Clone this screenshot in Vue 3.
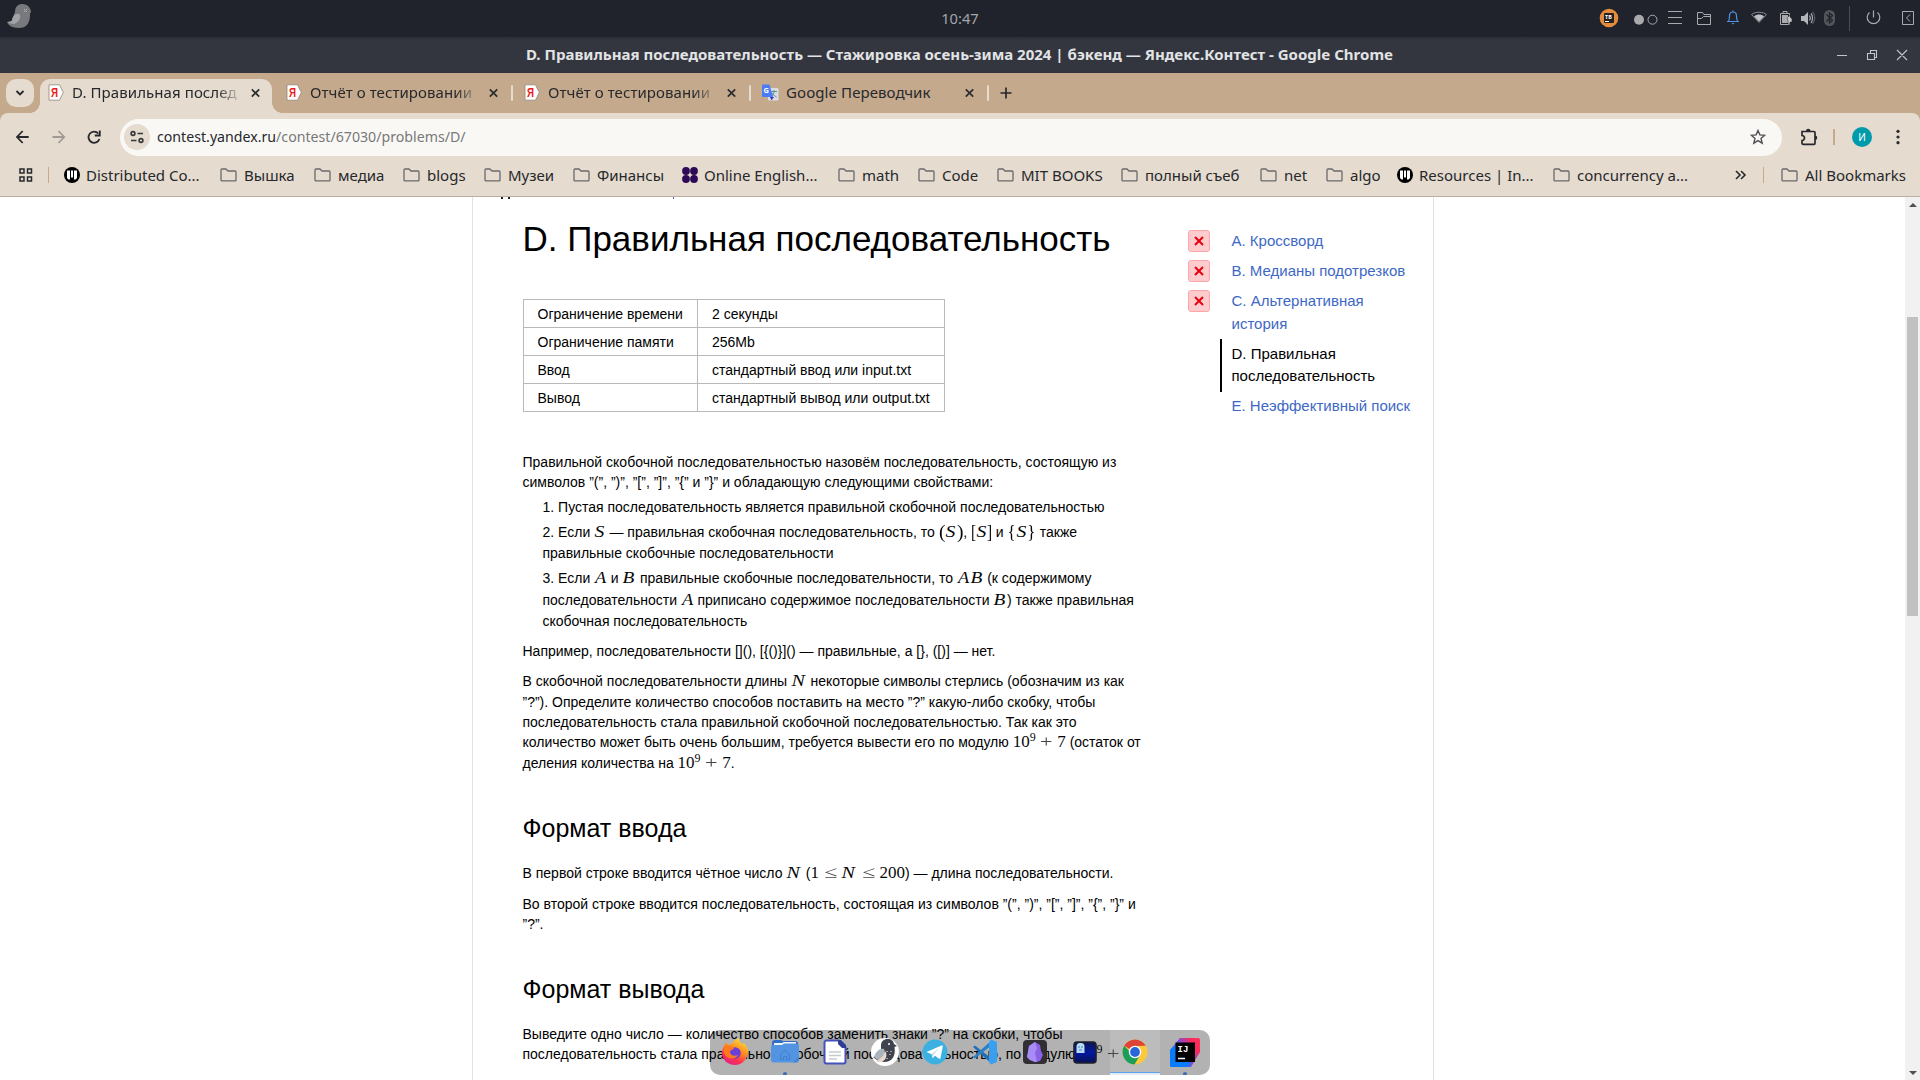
<script setup>
const tabs = [
  { title: 'D. Правильная послед', icon: 'ya', active: true },
  { title: 'Отчёт о тестировании', icon: 'ya' },
  { title: 'Отчёт о тестировании', icon: 'ya' },
  { title: 'Google Переводчик', icon: 'gt', short: true },
]
const bookmarks = [
  { t: 'Distributed Co...', i: 'pillars', w: 156 },
  { t: 'Вышка', i: 'folder', w: 94 },
  { t: 'медиа', i: 'folder', w: 89 },
  { t: 'blogs', i: 'folder', w: 81 },
  { t: 'Музеи', i: 'folder', w: 89 },
  { t: 'Финансы', i: 'folder', w: 109 },
  { t: 'Online English...', i: 'clover', w: 156 },
  { t: 'math', i: 'folder', w: 80 },
  { t: 'Code', i: 'folder', w: 79 },
  { t: 'MIT BOOKS', i: 'folder', w: 124 },
  { t: 'полный съеб', i: 'folder', w: 139 },
  { t: 'net', i: 'folder', w: 66 },
  { t: 'algo', i: 'folder', w: 71 },
  { t: 'Resources | In...', i: 'pillars', w: 156 },
  { t: 'concurrency a...', i: 'folder', w: 160 },
]
const limits = [
  ['Ограничение времени', '2 секунды'],
  ['Ограничение памяти', '256Mb'],
  ['Ввод', 'стандартный ввод или input.txt'],
  ['Вывод', 'стандартный вывод или output.txt'],
]
const problems = [
  { lines: ['A. Кроссворд'], failed: true },
  { lines: ['B. Медианы подотрезков'], failed: true },
  { lines: ['C. Альтернативная', 'история'], failed: true },
  { lines: ['D. Правильная', 'последовательность'], current: true },
  { lines: ['E. Неэффективный поиск'] },
]
</script>

<template>
  <div class="screen">
    <header class="panel">
      <svg class="bird" width="24" height="26" viewBox="0 0 24 26">
        <path d="M8 8C8 3 11 0 15 0c5 0 8 3 8.500 6l1 2-1.500 1c.5 9-3 15-11 15C5 24 1 21 0 18c2 1 4 0 5-2z" fill="#77797d" />
        <path d="M5 17c0-4 3-8 7-7 3 2 0 9-5 10-3 0-5-1-7-2z" fill="#a2a3a6" />
        <path d="m17 5 3 3m0-3-3 3" stroke="#a8a9ab" stroke-width="1" />
      </svg>
      <span class="clock">10:47</span>
      <div class="tray">
        <svg width="30" height="37" viewBox="0 0 30 37"><circle cx="13" cy="18" r="9.300" fill="#e48b3d" /><rect x="8" y="13" width="10" height="10" rx="1" fill="#25201f" /><text x="9" y="18.800" font-size="5.500" font-weight="700" fill="#fff" font-family="Noto Sans">TB</text><path d="M9 21.500h4" stroke="#fff" /></svg>
        <svg width="38" height="37" viewBox="0 0 38 37"><circle cx="13" cy="19.700" r="5" fill="#a8aaae" /><circle cx="26.500" cy="19.700" r="4.500" fill="none" stroke="#a8aaae" /></svg>
        <svg width="26" height="37" viewBox="0 0 26 37"><path d="M4 11.500h14M4 17.500h14M4 23.500h14" stroke="#a8aaae" /></svg>
        <svg width="30" height="37" viewBox="0 0 30 37"><path d="M7.500 24.500v-12h5l1.500 2h6.500v10zM7.500 18.500h4l2-2h7M20.500 14.500v10" fill="none" stroke="#a8aaae" /></svg>
        <svg width="30" height="37" viewBox="0 0 30 37"><path d="M7 21.500h12M8.500 21c1-1 1-3 1-5 0-3 1.500-4 3.500-4s3.500 1 3.500 4c0 2 0 4 1 5M13 10.500v2" fill="none" stroke="#4f94e6" stroke-width="1.200" /><path d="M11.500 23h3l-1.500 1.500z" fill="#4f94e6" /></svg>
        <svg width="28" height="37" viewBox="0 0 28 37"><path d="M1.500 14.500C5 11.500 13 11.500 16.500 14.500L9 22.500z" fill="none" stroke="#85878b" /><path d="M4 16.200c3-2.400 7-2.400 10 0l-5 5.500z" fill="#c0c1c4" /></svg>
        <svg width="20" height="37" viewBox="0 0 20 37"><path d="M2.500 13.500h9v11h-9zM5 13v-1.500h4V13" fill="none" stroke="#a8aaae" /><path d="M4 15h6v8H4z" fill="#a8aaae" /><path d="m9 18 3-3v2l2 2v3h-2v2h-2v-3z" fill="#c4c5c7" stroke="#20232b" stroke-width=".5" /></svg>
        <svg width="20" height="37" viewBox="0 0 20 37"><path d="M3 16h3l4-4v13l-4-4H3z" fill="#b4b6b9" /><path d="M11.500 15.500c1 1.500 1 3.500 0 5M13 13.500c2 2 2 7 0 9.500" fill="none" stroke="#a8aaae" stroke-width="1.200" /><path d="M14.500 11.800c3 3 3 9 0 12" fill="none" stroke="#5b5d63" stroke-width="1.200" /></svg>
        <svg width="30" height="37" viewBox="0 0 30 37"><rect x="6" y="10" width="11" height="16" rx="5.500" fill="#53555a" /><path d="m8.500 14.500 6 6-3 2.500V13l3 2.500-6 6" fill="none" stroke="#20232b" stroke-width="1.200" /></svg>
        <svg width="36" height="37" viewBox="0 0 36 37"><path d="M1.500 6v25" stroke="#4b4d53" /><path d="M21.500 13a6.300 6.300 0 1 0 8 0M25.500 11v7" fill="none" stroke="#a8aaae" stroke-width="1.200" transform="translate(0 -.5)" /></svg>
        <svg width="36" height="37" viewBox="0 0 36 37"><path d="M18.500 11.500h11v13h-11zM26 14.500l-3.500 3.500 3.500 3.500" fill="none" stroke="#a8aaae" /></svg>
      </div>
    </header>

    <div class="titlebar">
      <span>D. Правильная последовательность — Стажировка осень-зима 2024 | бэкенд — Яндекс.Контест - Google Chrome</span>
      <svg class="winbtns" width="90" height="36" viewBox="0 0 90 36"><path d="M7 18.500h10M37.500 16.500h7v6h-7zM40.500 16v-2.500h6v7h-2M67 13l10 10m0-10L67 23" fill="none" stroke="#c3c4c7" stroke-width="1.100" /></svg>
    </div>

    <div class="tabstrip">
      <button class="search"><svg width="10" height="8" viewBox="0 0 10 8"><path d="m1.500 2 3.500 3.500L8.500 2" fill="none" stroke="#26282c" stroke-width="1.800" /></svg></button>
      <div v-for="(t, i) in tabs" :key="i" class="tab" :class="{ active: t.active }">
        <svg v-if="t.icon === 'ya'" class="fav" width="17" height="17" viewBox="0 0 17 17"><path d="M1 .8h10.500L15.300 8.500 11.500 16.200H1z" fill="#fff" stroke="#8f877e" stroke-width=".8" stroke-linejoin="round" /><text x="3" y="13" font-size="12" font-weight="700" fill="#f01818" font-family="Liberation Sans" textLength="7" lengthAdjust="spacingAndGlyphs">Я</text></svg>
        <svg v-else class="fav" width="17" height="17" viewBox="0 0 17 17"><rect x="6" y="4" width="10.500" height="12.500" rx="1.200" fill="#dcdde0" /><path d="M9 7.500h6M12 6v1.500c0 3-2 4-3 4.500m1-3c1 2 3 3 4.500 4" stroke="#5d8ba0" fill="none" /><path d="m8 13 4 0-2.500 3.300z" fill="#3a2fc0" /><path d="M1.200.5h6.300L11 13H1.200A1 1 0 0 1 0 12V1.500a1 1 0 0 1 1.200-1z" fill="#4a7df5" /><text x="1.600" y="9" font-size="7.500" font-weight="700" fill="#fff" font-family="Noto Sans">G</text></svg>
        <span class="ttl" :class="{ fade: !t.short }">{{ t.title }}</span>
        <svg class="x" width="9" height="10" viewBox="0 0 9 10"><path d="m.8 1.300 7.400 7.400m0-7.400L.8 8.700" stroke="#2b2c2e" stroke-width="1.700" /></svg>
        <i v-if="i > 0" class="tsep"></i>
      </div>
      <svg class="plus" width="12" height="12" viewBox="0 0 12 12"><path d="M6 .5v11M.5 6h11" stroke="#26282c" stroke-width="1.700" /></svg>
    </div>

    <div class="toolbar">
      <div class="nav">
        <svg width="36" height="20" viewBox="0 0 36 20"><path d="M12.500 4 6.800 10l5.700 6M7 10h11.500" transform="translate(-.8 0)" fill="none" stroke="#26282c" stroke-width="1.800" /></svg>
        <svg width="36" height="20" viewBox="0 0 36 20"><path d="m12 4 5.700 6-5.700 6M17.500 10H6" transform="translate(-.5 0)" fill="none" stroke="#a19a92" stroke-width="1.800" /></svg>
        <svg width="36" height="20" viewBox="0 0 36 20"><path d="M16.500 6.500A5.600 5.600 0 1 0 17.600 12M18 3.500v5h-5" transform="translate(-1.200 0)" fill="none" stroke="#26282c" stroke-width="1.800" /></svg>
      </div>
      <div class="url">
        <span class="site"><svg width="14" height="14" viewBox="0 0 14 14"><path d="M7.500 3.500H13M1 10.500h5.500" stroke="#35373a" stroke-width="1.700" /><circle cx="3" cy="3.500" r="1.900" fill="none" stroke="#35373a" stroke-width="1.600" /><circle cx="11" cy="10.500" r="1.900" fill="none" stroke="#35373a" stroke-width="1.600" /></svg></span>
        <span class="addr"><b>contest.yandex.ru</b>/contest/67030/problems/D/</span>
        <svg class="star" width="16" height="16" viewBox="0 0 16 16"><path d="m8 1.500 1.900 4.400 4.800.4-3.700 3.100 1.200 4.800L8 11.600l-4.200 2.600L5 9.400 1.300 6.300l4.800-.4z" fill="none" stroke="#505255" stroke-width="1.400" /></svg>
      </div>
      <svg class="puz" width="18" height="18" viewBox="0 0 18 18"><path d="M2 3.500h12a1 1 0 0 1 1 1v10.800a1 1 0 0 1-1 1H3a1 1 0 0 1-1-1V12.500c3.300 0 3.300-5 0-5z" fill="none" stroke="#26282c" stroke-width="1.700" /><path d="M6 3a2.200 2.200 0 0 1 4.500 0zM15 7.500a2.200 2.200 0 0 1 0 4.500z" fill="#26282c" /></svg>
      <i class="vsep a"></i>
      <span class="ava">И</span>
      <svg class="dots" width="4" height="16" viewBox="0 0 4 16"><circle cx="2" cy="2.300" r="1.600" fill="#26282c" /><circle cx="2" cy="8" r="1.600" fill="#26282c" /><circle cx="2" cy="13.700" r="1.600" fill="#26282c" /></svg>
    </div>

    <div class="bookmarks">
      <svg class="apps" width="14" height="14" viewBox="0 0 14 14"><path d="M1 1h4v4H1zM8.500 1h4v4h-4zM1 9h4v4H1zM8.500 9h4v4h-4z" fill="none" stroke="#26282c" stroke-width="1.500" /></svg>
      <i class="vsep b"></i>
      <div v-for="b in bookmarks" :key="b.t" class="bm" :style="{ width: b.w + 'px' }">
        <svg v-if="b.i === 'folder'" width="18" height="16" viewBox="0 0 18 16"><path d="M1 13V3a1 1 0 0 1 1-1h4l2 2h7a1 1 0 0 1 1 1v8a.8.8 0 0 1-1 .8H2A1 1 0 0 1 1 13z" fill="none" stroke="#696a6c" stroke-width="1.300" /></svg>
        <svg v-else-if="b.i === 'pillars'" width="16" height="16" viewBox="0 0 16 16"><circle cx="8" cy="8" r="8" fill="#000" /><path d="M3 3.500h3v9H4.500L3 11zM7 3.500h2v7H7zM10 3.500h3V11l-1.500 1.500H10z" fill="#fff" /></svg>
        <svg v-else width="16" height="16" viewBox="0 0 16 16"><g fill="#2d0a55"><circle cx="4" cy="4" r="3.900" /><circle cx="12" cy="4" r="3.900" /><circle cx="4" cy="12" r="3.900" /><circle cx="12" cy="12" r="3.900" /></g></svg>
        <span>{{ b.t }}</span>
      </div>
      <svg class="more" width="12" height="10" viewBox="0 0 12 10"><path d="m1 1 4 4-4 4M6 1l4 4-4 4" fill="none" stroke="#26282c" stroke-width="1.600" /></svg>
      <i class="vsep c"></i>
      <div class="bm">
        <svg width="18" height="16" viewBox="0 0 18 16"><path d="M1 13V3a1 1 0 0 1 1-1h4l2 2h7a1 1 0 0 1 1 1v8a.8.8 0 0 1-1 .8H2A1 1 0 0 1 1 13z" fill="none" stroke="#696a6c" stroke-width="1.300" /></svg>
        <span>All Bookmarks</span>
      </div>
    </div>

    <div class="view">
      <div class="page">
        <i class="sliver s1"></i><i class="sliver s2"></i><i class="sliver s3"></i>
        <main>
          <h1>D. Правильная последовательность</h1>
          <table>
            <tbody><tr v-for="r in limits" :key="r[0]"><td>{{ r[0] }}</td><td>{{ r[1] }}</td></tr></tbody>
          </table>
          <div class="p">
            <div>Правильной скобочной последовательностью назовём последовательность, состоящую из</div>
            <div>символов ”(”, ”)”, ”[”, ”]”, ”{” и ”}” и обладающую следующими свойствами:</div>
          </div>
          <ol>
            <li><div>1. Пустая последовательность является правильной скобочной последовательностью</div></li>
            <li>
              <div class="h21">2. Если <em class="s">S</em> — правильная скобочная последовательность, то <em class="pr">(</em><em class="s">S</em><em class="pr">)</em>, <em class="sq">[</em><em class="s">S</em><em class="sq">]</em> и <em class="cu">{</em><em class="s">S</em><em class="cu">}</em> также</div>
              <div>правильные скобочные последовательности</div>
            </li>
            <li>
              <div class="h22">3. Если <em class="a">A</em> и <em class="b">B</em> правильные скобочные последовательности, то <em class="a">A</em><em class="b">B</em> (к содержимому</div>
              <div class="h21">последовательности <em class="a">A</em> приписано содержимое последовательности <em class="b">B</em>) также правильная</div>
              <div>скобочная последовательность</div>
            </li>
          </ol>
          <div class="p">
            <div>Например, последовательности [](), [{()}]() — правильные, а [}, ([)] — нет.</div>
          </div>
          <div class="p">
            <div class="h21">В скобочной последовательности длины <em class="n">N</em> некоторые символы стерлись (обозначим из как</div>
            <div>”?”). Определите количество способов поставить на место ”?” какую-либо скобку, чтобы</div>
            <div>последовательность стала правильной скобочной последовательностью. Так как это</div>
            <div class="h21">количество может быть очень большим, требуется вывести его по модулю <em class="d">10</em><sup>9</sup><u>+</u><em class="d">7</em> (остаток от</div>
            <div>деления количества на <em class="d">10</em><sup>9</sup><u>+</u><em class="d">7</em>.</div>
          </div>
          <h2>Формат ввода</h2>
          <div class="p">
            <div>В первой строке вводится чётное число <em class="n">N</em> (<em class="d">1</em><u class="le">≤</u><em class="n">N</em><u class="le">≤</u><em class="d">200</em>) — длина последовательности.</div>
          </div>
          <div class="p p11">
            <div>Во второй строке вводится последовательность, состоящая из символов ”(”, ”)”, ”[”, ”]”, ”{”, ”}” и</div>
            <div>”?”.</div>
          </div>
          <h2>Формат вывода</h2>
          <div class="p">
            <div>Выведите одно число — количество способов заменить знаки ”?” на скобки, чтобы</div>
            <div>последовательность стала правильной скобочной последовательностью, по модулю <em class="d">10</em><sup>9</sup><u>+</u><em class="d">7</em>.</div>
          </div>
        </main>
        <nav class="side">
          <div v-for="p in problems" :key="p.lines[0]" class="prob" :class="{ cur: p.current }">
            <span class="badge" v-if="p.failed"><svg width="10" height="10" viewBox="0 0 10 10"><path d="m1 1 8 8m0-8L1 9" stroke="#e8000d" stroke-width="2" /></svg></span>
            <a><div v-for="l in p.lines" :key="l">{{ l }}</div></a>
          </div>
        </nav>
      </div>
      <div class="scroll">
        <i class="up"></i><i class="thumb"></i><i class="down"></i>
      </div>
    </div>

    <div class="dock">
      <span><svg width="28" height="28" viewBox="0 0 28 28">
        <defs><linearGradient id="fx" x1=".8" y1="0" x2=".3" y2="1"><stop offset="0" stop-color="#ffe43c" /><stop offset=".45" stop-color="#ff8a1e" /><stop offset=".75" stop-color="#ff3350" /><stop offset="1" stop-color="#e0208a" /></linearGradient></defs>
        <path d="M3 8c1-2 2-3 3-4 0 1 .5 2 1 3 1-1 3-1 4-1 1-3 4-5 7-6 0 3 1 4 3 6l2-1c3 3 4 6 4 9 0 7-6 13-13 13S1 22 1 15c0-3 1-5 2-7z" fill="url(#fx)" />
        <circle cx="14" cy="15" r="5.800" fill="#6b3fd8" /><path d="M3 9c4-3 8-1 10 2-2 1-4 1-4 3 0 3 4 5 8 3-3 6-13 4-14-3z" fill="#ff7a1c" />
      </svg></span>
      <span class="run"><svg width="30" height="26" viewBox="0 0 30 26"><path d="M2 4c0-2 1-3 3-3h6l2 1h12c2 0 3 1 3 2v5H2z" fill="#2f6fc8" /><path d="M4 4h8l2-1h12v4H4z" fill="#eef3fa" /><path d="M1 7.500c0-1 1-1.500 2-1.500h9l2-1.500h12c2 0 3 1 3 2V21c0 1.500-1 2.500-2.500 2.500H3.500C2 23.500 1 22.500 1 21z" fill="#5294e2" /><path d="M10.500 15.500 15 11l4.500 4.500v5h-3v-3h-3v3h-3z" fill="none" stroke="#3f7fcf" stroke-width="1" /><path d="M29 17v4l-3 2.500h-3z" fill="#4585d3" /></svg></span>
      <span><svg width="24" height="26" viewBox="0 0 24 26"><path d="M3.500 1.500H16L22.500 8v14.500a2 2 0 0 1-2 2h-17a2 2 0 0 1-2-2v-19a2 2 0 0 1 2-2z" fill="#fff" stroke="#4453b8" stroke-width="2" /><path d="M15 1h3l5 5v3h-4l-4-4z" fill="#303d96" /><path d="M6 13h12M6 16.500h12M6 20h8" stroke="#c9cace" stroke-width="1.500" /></svg></span>
      <span><svg width="30" height="30" viewBox="0 0 30 30"><circle cx="15" cy="15" r="14" fill="#fff" /><path d="M11 9c0-5 3-7 6.500-7 4 0 6 2 6.500 5l3 2-2.500 1C26 19 22 25 14 25c-4 0-8-2-11-5 4 0 7-3 8-6z" fill="#3e434d" /><path d="M4 20c2-6 6-9 10-8 2 4-1 10-6 11-2-1-3-2-4-3z" fill="#a9b4bd" /><path d="m6 25 7-6 2-5c3 4 1 9-3 11z" fill="#e9d9cc" /><circle cx="19" cy="7" r="1" fill="#fff" /><path d="M17 14v1m3 2v1m-3 3v1m4-8v1" stroke="#fff" /></svg></span>
      <span><svg width="26" height="26" viewBox="0 0 26 26"><circle cx="13" cy="13" r="12.500" fill="#3db0e2" /><path d="m4.500 13 15-6.500c1-.3 1.500.2 1.300 1L18.500 19c-.3 1-1 1-1.700.6L13 16.800l-2.500 2.500-.8-4z" fill="#fff" /><path d="m9.700 15 7.500-6-6 7-.7 3.300z" fill="#c0dcec" /></svg></span>
      <span><svg width="26" height="26" viewBox="0 0 26 26"><path d="m1 8 2-1.500L20 20v5z" fill="#1f6fb8" /><path d="m1 18 2 1.500L20 6V1z" fill="#2a80c8" /><path d="m19 .5 6 2.500v20l-6 2.500L17 23V3z" fill="#3a9ff0" /></svg></span>
      <span><svg width="26" height="26" viewBox="0 0 26 26"><rect x="1" y="1" width="24" height="24" rx="4" fill="#312f33" /><path d="m13 3 5 3 1 6 2 4-3 6-5 1-5-2-3-3 1-5 1-6z" fill="#8b62e6" /><path d="m13 3 2 6-2 5 2 9-2 0-5-2-3-3 1-5 1-6z" fill="#a88cf5" /></svg></span>
      <span><svg width="26" height="26" viewBox="0 0 26 26"><defs><linearGradient id="kc" x2="0" y2="1"><stop offset="0" stop-color="#0b1550" /><stop offset=".5" stop-color="#0418a0" /><stop offset="1" stop-color="#061056" /></linearGradient></defs><rect x="2" y="3" width="22" height="21" rx="3" fill="url(#kc)" stroke="#202228" stroke-width="1.600" /><path d="M4.500 14V8c0-3 1-4 4-4s4 1 4 4v6z" fill="#b8dcf4" /><path d="M7 7v2m3-2v2M7 11h3" stroke="#4b86ba" /></svg></span>
      <span class="on"><svg width="26" height="26" viewBox="0 0 26 26"><circle cx="13" cy="13" r="12.500" fill="#fbc93c" /><path d="M13 13 2.200 6.700A12.500 12.500 0 0 1 23.800 6.800L13 7z" fill="#dd4437" /><path d="M2.200 6.700A12.500 12.500 0 0 0 12.500 25.500L18 16l-5 2z" fill="#1b9e5a" /><circle cx="13" cy="13" r="6.200" fill="#fff" /><circle cx="13" cy="13" r="4.900" fill="#2a66d9" /></svg></span>
      <span class="run"><svg width="30" height="30" viewBox="0 0 30 30"><defs><linearGradient id="ij" x1="0" x2="1" y1=".8" y2=".2"><stop offset="0" stop-color="#0a7dff" /><stop offset=".5" stop-color="#7a4ce0" /><stop offset=".85" stop-color="#fe2857" /><stop offset="1" stop-color="#fe315d" /></linearGradient></defs><path d="M10 1h18c1 0 2 .5 2 2v12l-9 15H2c-1.500 0-2-1-2-2V13z" fill="url(#ij)" /><path d="m0 13 6-5v16l15-2v2l-3 6H2c-1.500 0-2-1-2-2z" fill="#087cfa" /><rect x="5.500" y="5.500" width="19.500" height="19.500" fill="#000" /><text x="7.500" y="15" font-size="9" font-weight="700" fill="#fff" font-family="Liberation Mono">IJ</text><path d="M8 21.500h7" stroke="#fff" stroke-width="1.500" /></svg></span>
    </div>
  </div>
</template>

<style>
body { overflow: hidden; background: #fff; }
</style>
<style scoped>
.screen { width: 1920px; height: 1080px; display: flex; flex-direction: column; position: relative; overflow: hidden; font-family: "Noto Sans", sans-serif; font-size: 15px; color: #26282c; background: linear-gradient(#c4a98d, #c4a98d) 0 73px / 100% 60px no-repeat; }
.screen * { box-sizing: border-box; }
svg { display: block; flex: none; }
i { font-style: normal; }
.panel { height: 37px; background: #20232b; display: flex; justify-content: space-between; align-items: flex-start; flex: none; position: relative; }
.bird { margin: 4px 0 0 7px; }
.clock { position: absolute; left: 0; right: 0; top: 7px; text-align: center; line-height: 22px; font-size: 14.700px; color: #a3a5a9; }
.tray { display: flex; }
.titlebar { height: 36px; background: linear-gradient(#2c2f36, #33363f 4px); flex: none; display: flex; align-items: center; justify-content: center; padding: 0 1px 2px 0; font-weight: 700; font-size: 15.030px; color: #e2e3e5; position: relative; white-space: nowrap; }
.winbtns { position: absolute; right: 0; top: 0; }
.tabstrip { height: 40px; background: #c4a98d; flex: none; display: flex; align-items: flex-end; }
.search { width: 28px; height: 28px; margin: 0 6px 6px; border: 0; padding: 0; border-radius: 10px; background: #e5dbcf; display: flex; align-items: center; justify-content: center; }
.tab { width: 238px; height: 34px; display: flex; align-items: center; padding: 0 0 7px 8px; position: relative; }
.tab.active { background: #e5dbcf; width: 232px; margin-right: 6px; border-radius: 10px 10px 0 0; }
.tab.active::before, .tab.active::after { content: ""; position: absolute; bottom: 0; width: 10px; height: 10px; }
.tab.active::before { left: -10px; background: radial-gradient(circle at 0 0, transparent 9.500px, #e5dbcf 10px); }
.tab.active::after { right: -10px; background: radial-gradient(circle at 100% 0, transparent 9.500px, #e5dbcf 10px); }
.ttl { margin: -2px 0 0 7px; width: 167px; overflow: hidden; white-space: nowrap; line-height: 22px; letter-spacing: .08px; }
.ttl.fade { -webkit-mask-image: linear-gradient(90deg, #000 145px, transparent 170px); mask-image: linear-gradient(90deg, #000 145px, transparent 170px); }
.x { margin-left: 12px; }
.tsep { width: 2px; height: 16px; background: #e5dbcf; margin-left: 13px; border-radius: 1px; }
.plus { margin: 0 0 14px 8px; }
.toolbar { height: 46px; background: #e5dbcf; flex: none; display: flex; align-items: center; padding-top: 2px; border-radius: 8px 8px 0 0; }
.nav { display: flex; width: 120px; padding-left: 11px; }
.url { width: 1662px; height: 37px; margin-top: 1px; border-radius: 19px; background: #faf8f5; display: flex; align-items: center; padding-left: 4px; }
.site { width: 26px; height: 26px; margin-top: -1px; border-radius: 13px; background: #e5dbcf; display: flex; align-items: center; justify-content: center; }
.addr { margin: -1px 0 0 7px; flex: 1; color: #77787a; font-size: 14.170px; line-height: 22px; }
.addr b { font-weight: 400; color: #26282c; }
.star { margin: -1px 16px 0 0; }
.puz { margin-left: 18px; margin-top: -1px; }
.vsep { width: 2px; height: 16px; background: #c4a98d; flex: none; }
.vsep.a { margin-left: 15px; }
.ava { width: 20px; height: 20px; border-radius: 10px; margin-left: 17px; background: #009bab; color: #fff; font-size: 10px; line-height: 20px; text-align: center; }
.dots { margin-left: 24px; }
.bookmarks { height: 38px; background: #e5dbcf; border-bottom: 1px solid #bbaea2; flex: none; display: flex; align-items: center; padding-bottom: 5px; white-space: nowrap; }
.apps { margin-left: 19px; }
.vsep.b { margin: 0 15px 0 15px; width: 1px; }
.bm { display: flex; align-items: center; flex: none; }
.bm span { margin-left: 6px; line-height: 22px; margin-top: -1px; }
.more { margin-left: 22px; }
.vsep.c { margin: 0 17px 0 16px; width: 1px; }
.view { flex: 1; display: flex; background: #fff; min-height: 0; font-family: "Liberation Sans", Arial, sans-serif; color: #000; }
.page { width: 962px; margin-left: 472px; border: 1px solid #e3e3e3; border-width: 0 1px; display: flex; position: relative; overflow: hidden; }
.sliver { position: absolute; top: 0; width: 2px; height: 2px; background: #222; }
.s1 { left: 28px; } .s2 { left: 35px; } .s3 { left: 200px; width: 1px; background: #4a62c8; }
main { width: 660px; margin-left: 49.500px; padding-top: 20px; font-size: 14px; line-height: 20px; white-space: nowrap; flex: none; }
h1 { margin: 0 0 38px; font-size: 35px; line-height: 44px; font-weight: 400; }
h2 { margin: 40px 0 20px; font-size: 25px; line-height: 30px; font-weight: 400; }
table { border-collapse: collapse; margin: 0 0 40px .5px; width: 422px; table-layout: fixed; }
td { border: 1px solid #b9b9b9; height: 28px; padding: 1px 13.500px 0; }
td:first-child { width: 174px; }
td + td { padding-left: 14px; }
.p div, li div { height: 20px; }
.p .h21, li .h21 { height: 21px; }
li .h22 { height: 22px; }
ol { list-style: none; margin: 5px 0 10px; padding: 0 0 0 20px; }
li { margin-bottom: 5px; }
.p + .p { margin-top: 10px; }
.p + .p11 { margin-top: 11px; }
em, main sup, main u { display: inline-block; font-family: "Liberation Serif", "Times New Roman", serif; font-size: 17px; line-height: 0; color: #080808; transform-origin: 0 0; text-decoration: none; }
em.s { width: 11.400px; transform: translateX(.6px) scaleX(1.16); }
em.a { width: 12.700px; transform: translateX(1px) scaleX(1.08); }
em.b { width: 13.700px; transform: translateX(.6px) scaleX(1.14); }
em.n { width: 15.500px; transform: translateX(.5px) scaleX(1.18); }
em.pr, em.sq, em.cu, em.d { font-style: normal; }
em.pr { width: 6.600px; transform: scale(1.15, 1.15); }
em.sq { width: 4.700px; transform: scale(.9, 1.15); }
em.cu { width: 8.500px; transform: scale(1, 1.15); }
main sup { width: 6.800px; font-size: 12px; vertical-align: 6px; }
main u { width: 13.200px; margin: 0 3.800px; transform: scaleX(1.3); color: #444; }
main u.le { margin: 0 4.700px; transform: scaleX(1.4); }
.side { margin-left: 5.500px; padding-top: 31px; font-size: 15px; line-height: 22px; color: #3d68c5; flex: 1; white-space: nowrap; }
.prob { position: relative; padding: 2px 0 6px 43.500px; min-height: 30px; }
.prob:nth-child(3) a div:first-child { height: 23px; }
.prob.cur { color: #000; }
.cur::before { content: ""; position: absolute; left: 32px; top: -2px; width: 2px; height: 53px; background: #000; }
.badge { position: absolute; left: 0; top: 2px; width: 22px; height: 22px; border: 1px solid #ffa5a8; border-radius: 3px; background: #ffcccd; display: flex; align-items: center; justify-content: center; }
.scroll { margin-left: auto; width: 15px; background: #f1f1f1; position: relative; }
.thumb { position: absolute; left: 2px; top: 120px; width: 11px; height: 299px; background: #c1c1c1; }
.up, .down { position: absolute; left: 4px; border: 4px solid transparent; }
.up { top: 2px; border-bottom-color: #505050; }
.down { bottom: 1px; border-top-color: #505050; }
.dock { position: absolute; left: 710px; top: 1030px; width: 500px; height: 45px; border-radius: 10px; background: rgba(0, 0, 0, .3); display: flex; }
.dock span { width: 50px; height: 45px; display: flex; align-items: center; justify-content: center; position: relative; padding-bottom: 1px; }
.dock span.on { background: linear-gradient(#5ca0ee, #5ca0ee) 0 42px / 100% 1px no-repeat, linear-gradient(#e2eaf3, #e2eaf3) 0 43px / 100% 2px no-repeat, rgba(255, 255, 255, .13); }
.run::after { content: ""; position: absolute; left: 23px; bottom: 0; width: 4px; height: 3px; border-radius: 2px 2px 0 0; background: #3f70ae; }
</style>
